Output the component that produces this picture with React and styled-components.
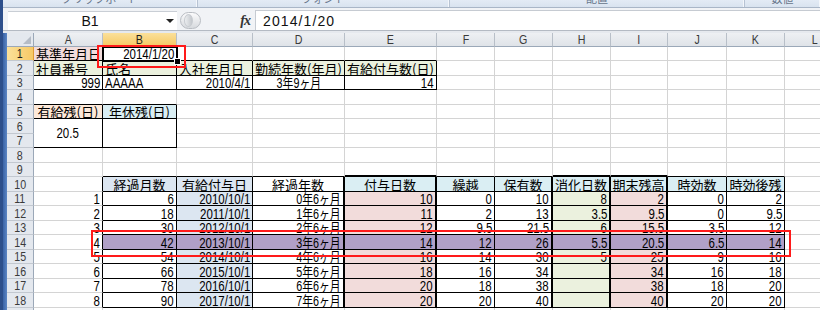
import React from 'react';
import styled, { createGlobalStyle, css } from 'styled-components';

const Global = createGlobalStyle`
  html, body { margin: 0; padding: 0; background: #fff; }
  body { width: 820px; height: 310px; overflow: hidden; }
`;

const LATIN_FONT = `"Liberation Sans", "Noto Sans CJK JP", sans-serif`;
const JP_FONT = `"Noto Sans CJK JP", sans-serif`;

const PINK = '#f2dcdb';
const GREEN = '#ebf1de';
const PEACH = '#fde9d9';
const AQUA = '#daeef3';
const STEEL = '#dce6f1';
const PURPLE = '#b1a0c7';
const GRID = '#d4d4d4';
const BLACK = '#000';

const COLS = ['A', 'B', 'C', 'D', 'E', 'F', 'G', 'H', 'I', 'J', 'K', 'L'];
const WIDTHS = [69, 74, 76, 92, 92, 58, 58, 58, 57, 59, 58, 60];
const ROWS = Array.from({ length: 19 }, (_, i) => i + 1);
const rowHeight = (r) => (r % 2 === 1 ? 14 : 15);

const DATA = {
  1: ['基準年月日', '2014/1/20'],
  2: ['社員番号', '氏名', '入社年月日', '勤続年数(年月)', '有給付与数(日)'],
  3: ['999', 'AAAAA', '2010/4/1', '3年9ヶ月', '14'],
  5: ['有給残(日)', '年休残(日)'],
  6: ['20.5', ''],
  10: ['', '経過月数', '有給付与日', '経過年数', '付与日数', '繰越', '保有数', '消化日数', '期末残高', '時効数', '時効後残'],
  11: ['1', '6', '2010/10/1', '0年6ヶ月', '10', '0', '10', '8', '2', '0', '2'],
  12: ['2', '18', '2011/10/1', '1年6ヶ月', '11', '2', '13', '3.5', '9.5', '0', '9.5'],
  13: ['3', '30', '2012/10/1', '2年6ヶ月', '12', '9.5', '21.5', '6', '15.5', '3.5', '12'],
  14: ['4', '42', '2013/10/1', '3年6ヶ月', '14', '12', '26', '5.5', '20.5', '6.5', '14'],
  15: ['5', '54', '2014/10/1', '4年6ヶ月', '16', '14', '30', '5', '25', '9', '16'],
  16: ['6', '66', '2015/10/1', '5年6ヶ月', '18', '16', '34', '', '34', '16', '18'],
  17: ['7', '78', '2016/10/1', '6年6ヶ月', '20', '18', '38', '', '38', '18', '20'],
  18: ['8', '90', '2017/10/1', '7年6ヶ月', '20', '20', '40', '', '40', '20', '20'],
};

function cellBg(r, c) {
  if (r === 1 && c === 0) return PINK;
  if (r === 2 && c <= 4) return GREEN;
  if (r === 5 && c === 0) return PEACH;
  if (r === 5 && c === 1) return AQUA;
  if (r === 10) {
    if (c === 1 || c === 2) return STEEL;
    if (c >= 4 && c <= 10) return AQUA;
    return '#fff';
  }
  if (r >= 11 && r <= 18) {
    if (r === 14 && c >= 1 && c <= 10) return PURPLE;
    if (c === 2) return STEEL;
    if (c === 4 || c === 8) return PINK;
    if (c === 7) return GREEN;
  }
  return '#fff';
}

function cellBorders(r, c) {
  let right = [1, GRID];
  let bottom = [1, GRID];
  if (r === 1 && c <= 4) bottom = [1, BLACK];
  if ((r === 2 || r === 3) && c <= 4) {
    right = [1, BLACK];
    bottom = [1, BLACK];
  }
  if (r === 4 && c <= 1) bottom = [1, BLACK];
  if ((r === 5 || r === 6) && c <= 1) {
    right = [1, BLACK];
    bottom = [1, BLACK];
  }
  const thickTop = [4, 7, 8];
  if (r === 9 && c >= 1 && c <= 10) bottom = [thickTop.includes(c) ? 2 : 1, BLACK];
  if (r >= 10 && r <= 18) {
    if (c === 0) right = [1, BLACK];
    if (c >= 1 && c <= 10) {
      right = [[3, 4, 6, 7, 8].includes(c) ? 2 : 1, BLACK];
      bottom = [1, BLACK];
    }
  }
  return { right, bottom };
}

function cellAlign(r, c) {
  if (r === 1) return c === 0 ? 'l' : 'r';
  if (r === 2) return 'l';
  if (r === 3) return c === 1 ? 'l' : c === 3 ? 'c' : 'r';
  if (r === 5 || r === 6 || r === 10) return 'c';
  return 'r';
}

// 'num': only digits / ascii, 'mix': digits with kana/kanji, 'jp': Japanese text
const textKind = (v) => {
  if (/^[\x00-\x7f]+$/.test(v)) return 'num';
  if (/\d/.test(v)) return 'mix';
  return 'jp';
};

/* ---------- window chrome ---------- */

const Window = styled.div`
  position: relative;
  width: 820px;
  height: 310px;
  overflow: hidden;
  display: flex;
  background: #fff;
`;

const LeftFrame = styled.div`
  flex: 0 0 3px;
  background: #2d4f8b;
`;

const Main = styled.div`
  flex: 1;
  display: flex;
  flex-direction: column;
  min-width: 0;
`;

const Ribbon = styled.div`
  height: 7px;
  display: flex;
  background: linear-gradient(#e3ebf5, #d9e3ef);
  border-bottom: 1px solid #a9b6c7;
  overflow: hidden;
`;

const RibbonGroup = styled.div`
  flex: 0 0 ${(p) => p.$w}px;
  display: flex;
  justify-content: center;
  align-items: flex-start;
  border-right: 1px solid #b7c3d3;
  box-shadow: inset -1px 0 0 #f4f7fb;
  &:last-child { border-right: none; flex: 1; }
`;

const RibbonLabel = styled.span`
  margin-top: -8px;
  font: 11px/12px ${JP_FONT};
  color: #66758a;
  white-space: nowrap;
`;

const FormulaBar = styled.div`
  height: 22px;
  display: flex;
  align-items: flex-end;
  background: #f1f3f6;
`;

const NameBox = styled.div`
  box-sizing: border-box;
  margin-left: 5px;
  width: 169px;
  height: 19px;
  background: #fff;
  border-top: 1px solid #c9ced5;
  display: flex;
  align-items: center;
`;

const NameText = styled.span`
  flex: 1;
  text-align: center;
  font: 14px/16px ${LATIN_FONT};
  color: #111;
  padding-left: 6px;
`;

const DropArrow = styled.span`
  width: 0;
  height: 0;
  margin-right: 3px;
  border-left: 4px solid transparent;
  border-right: 4px solid transparent;
  border-top: 4px solid #222;
`;

const Grip = styled.div`
  box-sizing: border-box;
  margin: 0 0 1px 3px;
  width: 21px;
  height: 17px;
  border-radius: 9px;
  border: 1px solid #b9bdc3;
  background: linear-gradient(#fbfbfc, #d7dade);
  display: flex;
  align-items: center;
  padding-left: 3px;
`;

const GripDot = styled.span`
  width: 7px;
  height: 11px;
  border-radius: 50%;
  background: linear-gradient(90deg, #eceef0, #c3c7cc);
  border: 1px solid #c7cbd0;
`;

const FxZone = styled.div`
  width: 54px;
  height: 19px;
  display: flex;
  align-items: center;
  justify-content: flex-end;
  padding-right: 5px;
  box-sizing: border-box;
`;

const Fx = styled.span`
  font: italic bold 14px/16px "Liberation Serif", serif;
  color: #333;
  letter-spacing: -1px;
`;

const FormulaInput = styled.div`
  flex: 1;
  height: 20px;
  box-sizing: border-box;
  background: #fff;
  border-left: 1px solid #c6cbd2;
  border-top: 1px solid #c6cbd2;
  display: flex;
  align-items: center;
  padding-left: 7px;
  font: 14px/16px ${LATIN_FONT};
  letter-spacing: 1.1px;
  color: #111;
`;

const Band = styled.div`
  height: 3px;
  box-sizing: border-box;
  border-top: 1px solid #b4bac3;
  background: #e6e9ee;
`;

/* ---------- sheet ---------- */

const Body = styled.div`
  flex: 1;
  display: flex;
  overflow: hidden;
`;

const SheetEdge = styled.div`
  flex: 0 0 4px;
  background: linear-gradient(90deg, #3a63a6, #5c86c4);
`;

const Grid = styled.div`
  display: grid;
  grid-template-columns: 27px ${WIDTHS.map((w) => `${w}px`).join(' ')};
  grid-template-rows: 14px ${ROWS.map((r) => `${rowHeight(r)}px`).join(' ')};
  align-content: start;
`;

const Corner = styled.div`
  box-sizing: border-box;
  background: #e4e8ee;
  border-right: 1px solid #9ba8b8;
  border-bottom: 1px solid #9ba8b8;
  display: flex;
  align-items: flex-end;
  justify-content: flex-end;
  padding: 0 2px 2px 0;
`;

const CornerTriangle = styled.span`
  width: 0;
  height: 0;
  border-left: 8px solid transparent;
  border-bottom: 8px solid #b5bcc6;
`;

const headerBase = css`
  box-sizing: border-box;
  display: flex;
  align-items: center;
  justify-content: center;
  overflow: hidden;
  color: #3a3a3a;
`;

const ColHeader = styled.div`
  ${headerBase};
  background: linear-gradient(#eef0f3, #dfe3e8);
  border-right: 1px solid #b8bfc8;
  border-bottom: 1px solid #9ba8b8;
  ${(p) =>
    p.$selected &&
    css`
      background: linear-gradient(#fbe09a, #f6c965);
      border-bottom-color: #e09b34;
      color: #1e1e1e;
    `}
`;

const RowHeader = styled.div`
  ${headerBase};
  background: #e4e8ee;
  border-right: 1px solid #9ba8b8;
  border-bottom: 1px solid #c2c8d0;
  ${(p) =>
    p.$selected &&
    css`
      background: linear-gradient(90deg, #fbe09a, #f6c965);
      border-right-color: #e09b34;
      color: #1e1e1e;
    `}
`;

const HeaderLabel = styled.span`
  display: inline-block;
  font: 13px/13px ${LATIN_FONT};
  transform: scaleX(0.82);
`;

const Cell = styled.div`
  box-sizing: border-box;
  display: flex;
  align-items: ${(p) => (p.$span > 1 ? 'center' : 'flex-end')};
  justify-content: ${(p) => (p.$align === 'l' ? 'flex-start' : p.$align === 'c' ? 'center' : 'flex-end')};
  grid-row: span ${(p) => p.$span};
  padding: 0 2px;
  overflow: hidden;
  white-space: nowrap;
  background: ${(p) => p.$bg};
  border-right: ${(p) => p.$rw}px solid ${(p) => p.$rc};
  border-bottom: ${(p) => p.$bw}px solid ${(p) => p.$bc};
  color: #000;
`;

const ORIGIN = { l: 'left', c: 'center', r: 'right' };

const CellText = styled.span`
  display: inline-block;
  white-space: nowrap;
  transform-origin: ${(p) => ORIGIN[p.$align]} bottom;
  ${(p) =>
    p.$kind === 'jp'
      ? css`
          font: 13px/13px ${JP_FONT};
        `
      : css`
          font: 14px/12px ${LATIN_FONT};
          transform: scaleX(${p.$kind === 'num' ? 0.82 : 0.77});
        `}
`;

/* ---------- overlays ---------- */

const ActiveFrame = styled.div`
  position: absolute;
  left: 102px;
  top: 46px;
  width: 76px;
  height: 16px;
  box-sizing: border-box;
  border: 2px solid #000;
  pointer-events: none;
`;

const FillHandle = styled.div`
  position: absolute;
  left: 174px;
  top: 58px;
  width: 7px;
  height: 7px;
  box-sizing: border-box;
  background: #000;
  border: 1px solid #fff;
`;

const Highlight = styled.div`
  position: absolute;
  left: ${(p) => p.$x}px;
  top: ${(p) => p.$y}px;
  width: ${(p) => p.$w}px;
  height: ${(p) => p.$h}px;
  box-sizing: border-box;
  border: 2px solid #ff1a1a;
  pointer-events: none;
`;

function SheetCells() {
  const out = [];
  out.push(
    <Corner key="corner">
      <CornerTriangle />
    </Corner>
  );
  COLS.forEach((c, i) =>
    out.push(
      <ColHeader key={`h${c}`} $selected={i === 1}>
        <HeaderLabel>{c}</HeaderLabel>
      </ColHeader>
    )
  );
  ROWS.forEach((r) => {
    out.push(
      <RowHeader key={`r${r}`} $selected={r === 1}>
        <HeaderLabel>{r}</HeaderLabel>
      </RowHeader>
    );
    COLS.forEach((_, c) => {
      if (r === 7 && c <= 1) return; // covered by merged cells A6:A7, B6:B7
      const span = r === 6 && c <= 1 ? 2 : 1;
      const v = (DATA[r] && DATA[r][c]) || '';
      const align = cellAlign(r, c);
      const { right, bottom } = cellBorders(r, c);
      out.push(
        <Cell
          key={`${r}-${c}`}
          $span={span}
          $align={align}
          $bg={cellBg(r, c)}
          $rw={right[0]}
          $rc={right[1]}
          $bw={bottom[0]}
          $bc={bottom[1]}
        >
          {v && (
            <CellText $kind={textKind(v)} $align={align}>
              {v}
            </CellText>
          )}
        </Cell>
      );
    });
  });
  return out;
}

export default function App() {
  return (
    <>
      <Global />
      <Window>
        <LeftFrame />
        <Main>
          <Ribbon>
            <RibbonGroup $w={194}>
              <RibbonLabel>クリップボード</RibbonLabel>
            </RibbonGroup>
            <RibbonGroup $w={251}>
              <RibbonLabel>フォント</RibbonLabel>
            </RibbonGroup>
            <RibbonGroup $w={294}>
              <RibbonLabel>配置</RibbonLabel>
            </RibbonGroup>
            <RibbonGroup>
              <RibbonLabel>数値</RibbonLabel>
            </RibbonGroup>
          </Ribbon>
          <FormulaBar>
            <NameBox>
              <NameText>B1</NameText>
              <DropArrow />
            </NameBox>
            <Grip>
              <GripDot />
            </Grip>
            <FxZone>
              <Fx>fx</Fx>
            </FxZone>
            <FormulaInput>2014/1/20</FormulaInput>
          </FormulaBar>
          <Band />
          <Body>
            <SheetEdge />
            <Grid>
              <SheetCells />
            </Grid>
          </Body>
        </Main>
        <ActiveFrame />
        <FillHandle />
        <Highlight $x={97} $y={45} $w={89} $h={23} />
        <Highlight $x={91} $y={230} $w={700} $h={27} />
      </Window>
    </>
  );
}
